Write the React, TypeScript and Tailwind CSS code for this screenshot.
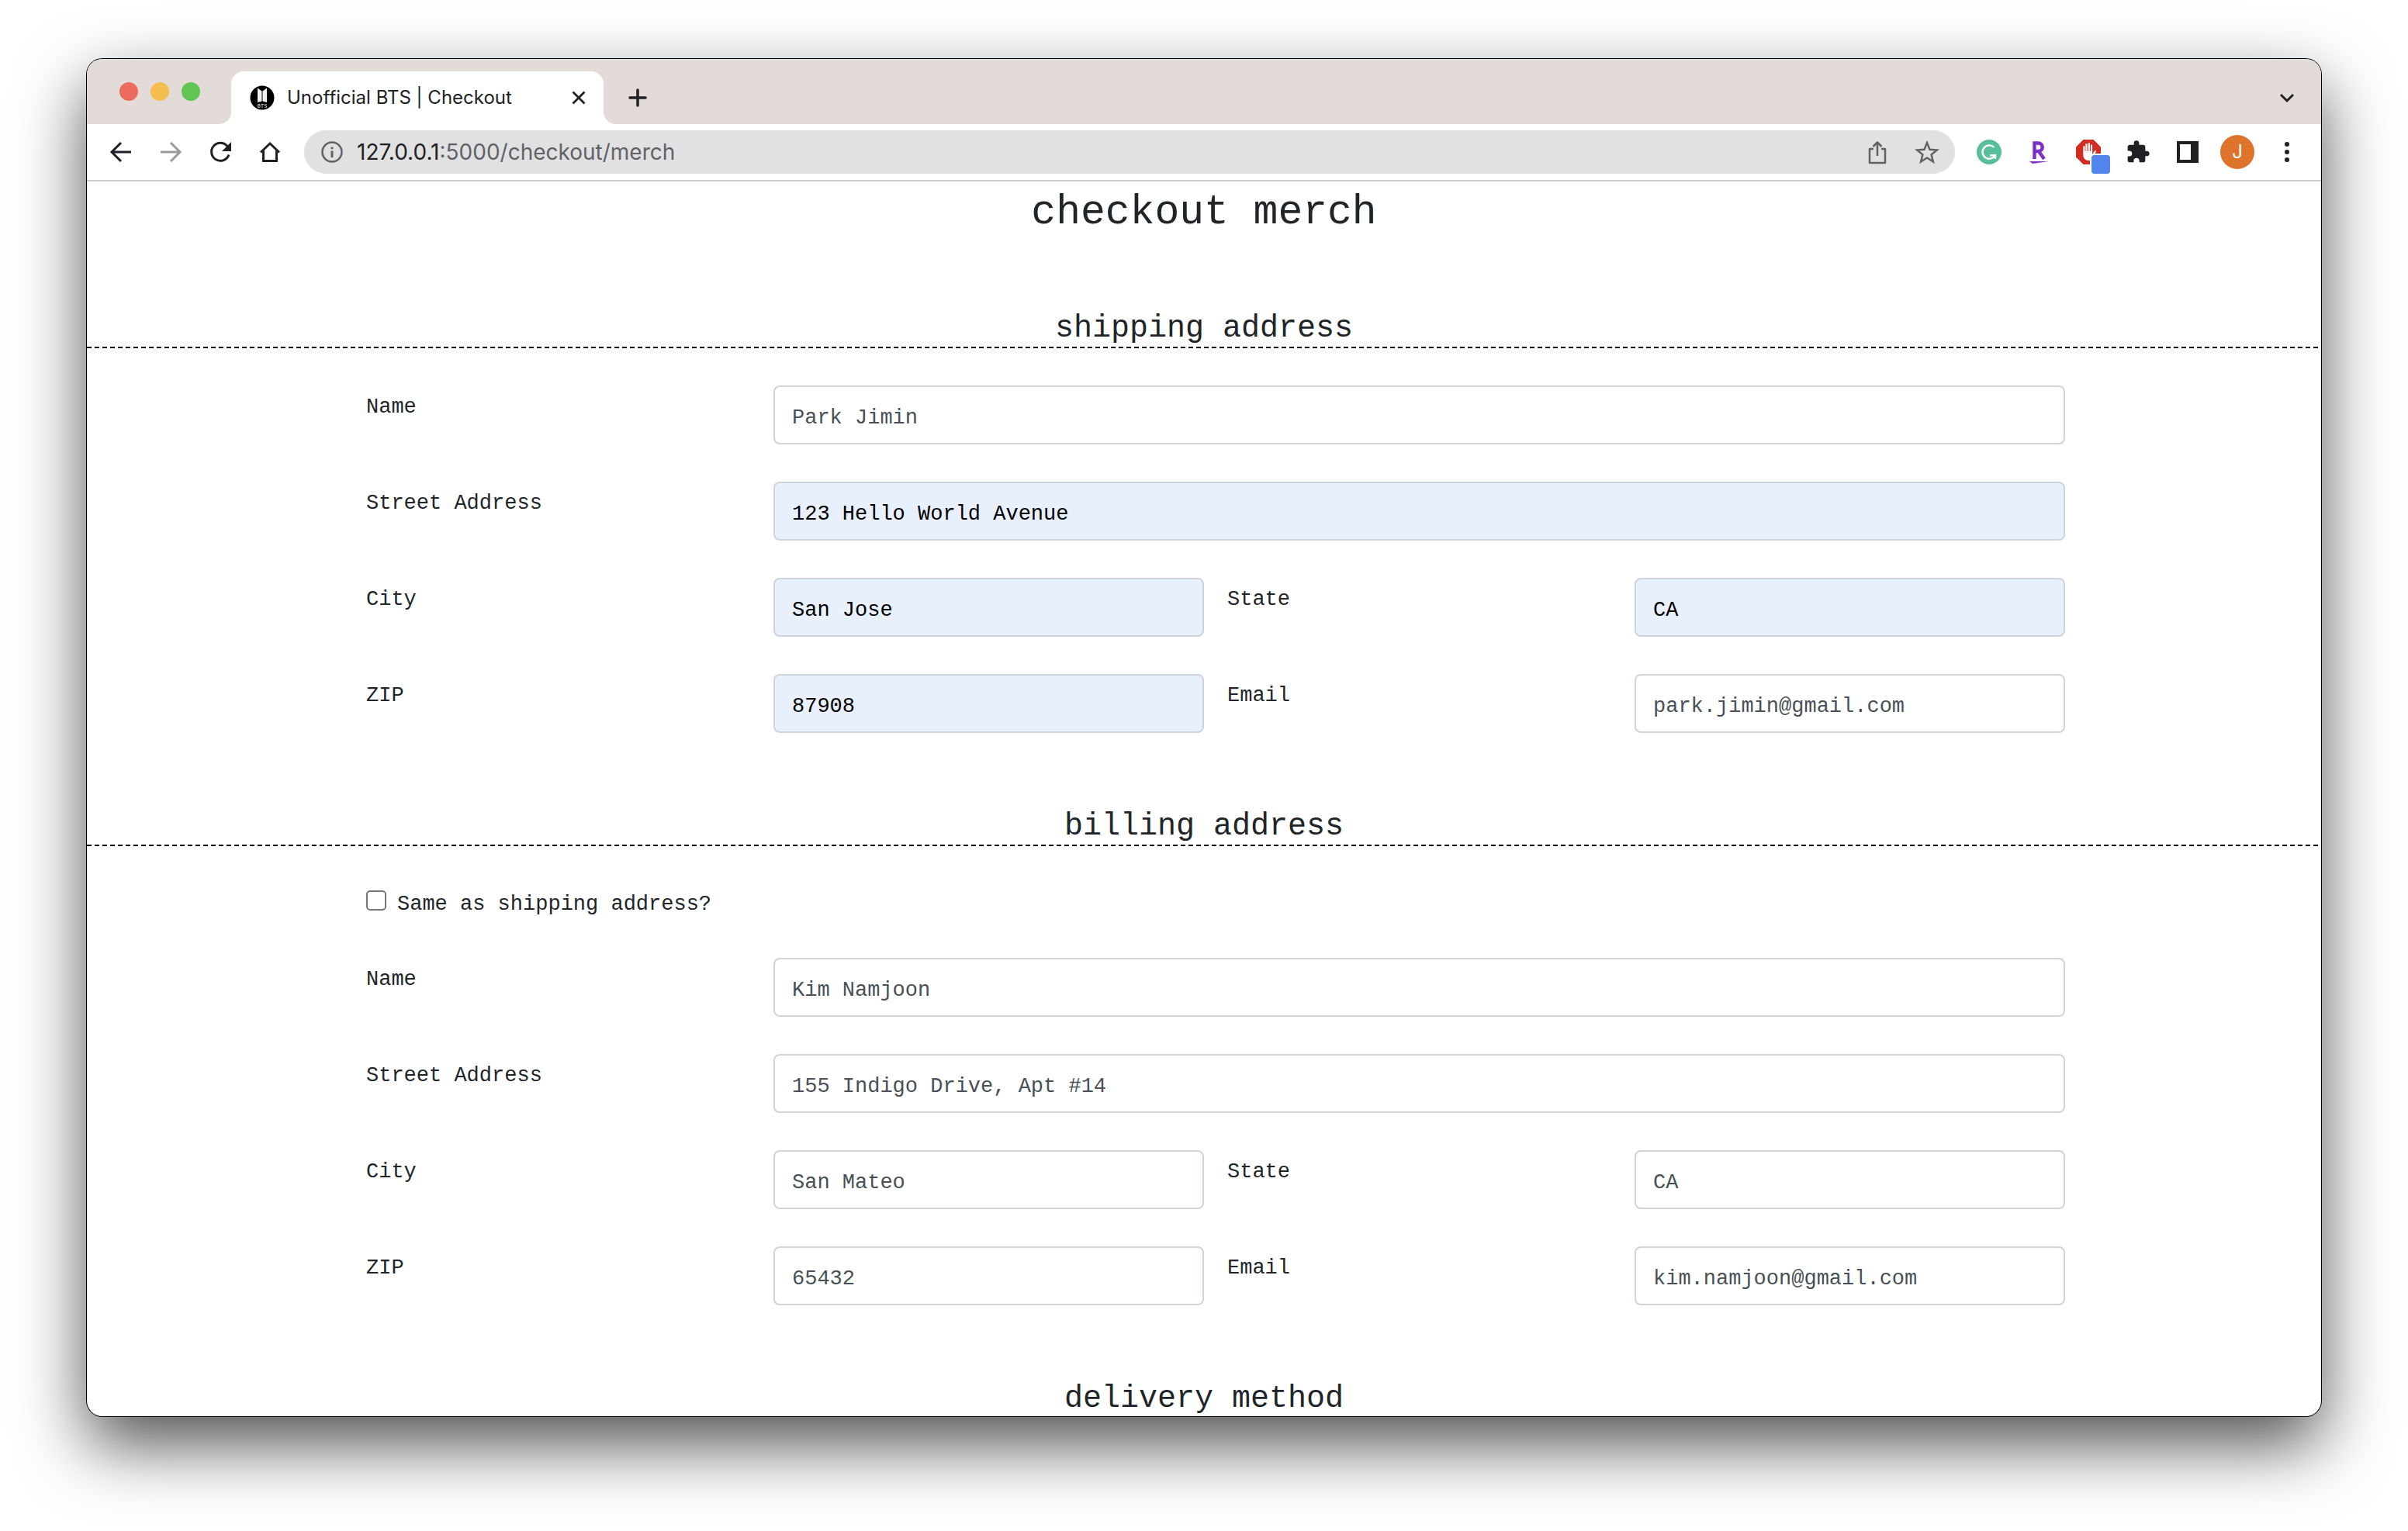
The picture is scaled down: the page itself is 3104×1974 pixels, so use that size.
import { ReactNode } from "react";

type FieldProps = { id: string; label: string; placeholder?: string; value?: string; wide?: boolean };

function Field({ id, label, placeholder, value, wide }: FieldProps) {
  return (
    <>
      <label htmlFor={id} className="pt-[10px] pl-[30px] text-[27px] leading-[36px] text-[#212529]">
        {label}
      </label>
      <input
        id={id}
        type="text"
        placeholder={placeholder}
        defaultValue={value}
        className={
          "h-19 w-full min-w-0 rounded-lg border-2 border-[#ced4da] px-[22px] pt-2 text-[27px] text-black placeholder:text-[#495057] placeholder:opacity-100 " +
          (value ? "bg-[#e8f0fe] " : "bg-white ") +
          (wide ? "col-span-3" : "")
        }
      />
    </>
  );
}

function SectionTitle({ children }: { children: ReactNode }) {
  return (
    <>
      <h2 className="pt-[2px] text-center text-[40px] leading-[46px] text-[#212529]">{children}</h2>
      <div className="h-[2px] bg-[repeating-linear-gradient(to_right,#000_0px,#000_6px,#fff_6px,#fff_10px)]" />
    </>
  );
}

function Fields({ children }: { children: ReactNode }) {
  return <div className="mx-auto grid w-full max-w-[2220px] grid-cols-4 gap-y-12">{children}</div>;
}

const iconButton = "flex size-16 shrink-0 items-center justify-center text-[#202124]";

function TabStrip() {
  return (
    <div className="flex h-[84px] items-end bg-[#e3dbd8] pl-[42px]">
      <div className="flex h-full items-center gap-4">
        <span className="size-6 rounded-full bg-[#ed6a5e]" />
        <span className="size-6 rounded-full bg-[#f5bf4f]" />
        <span className="size-6 rounded-full bg-[#61c554]" />
      </div>
      <div className="ml-6 flex items-end">
        <svg className="size-4" viewBox="0 0 16 16" aria-hidden="true">
          <path d="M16 0v16H0C9 16 16 9 16 0Z" fill="#fff" />
        </svg>
        <div className="flex h-[68px] w-[480px] items-center rounded-t-2xl bg-white pr-4 pl-6">
          <svg className="size-8 shrink-0" viewBox="0 0 32 32" aria-hidden="true">
            <circle cx="16" cy="16" r="15.5" fill="#000" />
            <path d="M10 3.500l5.500 4v13L10 22ZM22 3.500l-5.500 4v13L22 22Z" fill="#f2f2f2" />
            <path
              d="M10.500 24.500h2.500v4h-2.500ZM10.500 26.500h2.500M16 24.500v4.500M14.500 24.500h3.500M21.500 24.500h-2.200v2h2.200v2h-2.200"
              stroke="#c4c4c4"
              strokeWidth="0.900"
              fill="none"
            />
          </svg>
          <span className="ml-4 flex-1 text-[24px] whitespace-nowrap text-[#202124]">Unofficial BTS | Checkout</span>
          <button aria-label="Close tab" className="flex size-8 items-center justify-center">
            <svg className="size-5" viewBox="0 0 20 20" stroke="#202124" strokeWidth="2.800">
              <path d="M2.500 2.500l15 15M17.500 2.500l-15 15" />
            </svg>
          </button>
        </div>
        <svg className="size-4" viewBox="0 0 16 16" aria-hidden="true">
          <path d="M0 0v16h16C7 16 0 9 0 0Z" fill="#fff" />
        </svg>
      </div>
      <button aria-label="New tab" className="mb-[2px] flex h-16 w-14 items-center justify-center">
        <svg className="size-6" viewBox="0 0 24 24" stroke="#202124" strokeWidth="3.500" strokeLinecap="round">
          <path d="M12 2v20M2 12h20" />
        </svg>
      </button>
      <button aria-label="Search tabs" className="mr-3 mb-[2px] ml-auto flex size-16 items-center justify-center">
        <svg className="size-5" viewBox="0 0 20 20" fill="none" stroke="#202124" strokeWidth="3">
          <path d="M2 6l8 8 8-8" />
        </svg>
      </button>
    </div>
  );
}

function Toolbar() {
  return (
    <div className="flex h-[74px] shrink-0 items-center border-b-2 border-[#cdcdcd] bg-white px-3">
      <button aria-label="Back" className={iconButton}>
        <svg className="size-8" viewBox="0 0 32 32" fill="none" stroke="currentColor" strokeWidth="3">
          <path d="M29 16H5M16 4L4 16l12 12" />
        </svg>
      </button>
      <button aria-label="Forward" className={iconButton}>
        <svg className="size-8" viewBox="0 0 32 32" fill="none" stroke="#9b9b9b" strokeWidth="3">
          <path d="M3 16h24M16 4l12 12-12 12" />
        </svg>
      </button>
      <button aria-label="Reload" className={iconButton}>
        <svg className="size-8" viewBox="0 0 32 32" fill="none" stroke="currentColor" strokeWidth="3">
          <path d="M25 8.500A11.500 11.500 0 1 0 27 19.500" />
          <path d="M30 3v12H18Z" fill="currentColor" stroke="none" />
        </svg>
      </button>
      <button aria-label="Home" className={iconButton}>
        <svg className="size-8" viewBox="0 0 32 32" fill="none" stroke="currentColor" strokeWidth="3">
          <path d="M4 16.500L16 5l12 11.500M7.500 14v13.500h17V14" />
        </svg>
      </button>
      <div className="ml-3 flex h-14 min-w-0 flex-1 items-center rounded-full bg-[#e1e1e1] pr-1 pl-[22px]">
        <svg className="size-7 shrink-0" viewBox="0 0 28 28" fill="none" stroke="#5f6368" strokeWidth="2.500" aria-hidden="true">
          <circle cx="14" cy="14" r="12.500" />
          <path d="M14 12.500V21M14 7.500v2.800" strokeWidth="3" />
        </svg>
        <span className="ml-[18px] flex-1 truncate text-[28px] text-[#5f6368]">
          <span className="text-[#202124]">127.0.0.1</span>:5000/checkout/merch
        </span>
        <button aria-label="Share" className={iconButton}>
          <svg className="size-8" viewBox="0 0 32 32" fill="none" stroke="#5f6368" strokeWidth="2.500" strokeLinejoin="round">
            <path d="M11 12H6v18h20V12H21M16 21V4M10.500 9L16 3.500 21.500 9" />
          </svg>
        </button>
        <button aria-label="Bookmark" className={iconButton}>
          <svg className="size-8" viewBox="0 0 32 32" fill="none" stroke="#5f6368" strokeWidth="2.500">
            <path d="M16 4l3.500 8.700 9.300.7-7.200 6 2.300 9.100L16 23.500l-7.900 5 2.300-9.100-7.200-6 9.300-.7Z" />
          </svg>
        </button>
      </div>
      <div className="ml-3 flex">
        <button aria-label="Grammar" className={iconButton}>
          <svg className="size-8" viewBox="0 0 32 32" fill="none">
            <circle cx="16" cy="16" r="16" fill="#58bf9b" />
            <path d="M22.500 10a8.700 8.700 0 1 0 1.500 10M17 20.500L24 20v5" stroke="#fff" strokeWidth="2.400" />
          </svg>
        </button>
        <button aria-label="Rewards" className={iconButton}>
          <svg className="size-8" viewBox="0 0 32 32" fill="none">
            <path d="M10.500 25V4.500h5a4.900 4.900 0 0 1 0 10.500H10.500M16 15L23 25" stroke="#7d30c6" strokeWidth="4.400" />
            <path d="M4 28h25L8 31Z" fill="#7d30c6" />
          </svg>
        </button>
        <button aria-label="Ad blocker" className={iconButton + " relative"}>
          <svg className="size-8" viewBox="0 0 32 32">
            <path d="M9.500 0h13L32 9.500v13L22.500 32h-13L0 22.500v-13Z" fill="#d22d20" />
            <path d="M10.500 17V9M13.500 16V6M16.800 16V5M20 17V7.500" stroke="#fff" strokeWidth="2.200" strokeLinecap="round" />
            <path d="M9.400 15h11.700v4l3-4.500c1-1 2.200-.2 1.700 1L22 24c-1 2-2.500 3-5.500 3C12 27 9.400 24 9.400 20Z" fill="#fff" />
          </svg>
          <span className="absolute right-1 bottom-1 size-6 rounded bg-[#5286ec] shadow-[0_0_0_2px_#fff]" />
        </button>
        <button aria-label="Extensions" className={iconButton}>
          <svg className="size-8" viewBox="0 0 24 24" fill="currentColor">
            <path d="M20.500 11H19V7c0-1.100-.9-2-2-2h-4V3.500a2.500 2.500 0 0 0-5 0V5H4c-1.100 0-2 .9-2 2v3.800h1.500a2.700 2.700 0 0 1 0 5.400H2V20c0 1.100.9 2 2 2h3.800v-1.500a2.700 2.700 0 0 1 5.400 0V22H17c1.100 0 2-.9 2-2v-4h1.500a2.500 2.500 0 0 0 0-5Z" />
          </svg>
        </button>
        <button aria-label="Side panel" className={iconButton}>
          <svg className="size-7" viewBox="0 0 28 28" fill="currentColor">
            <path fillRule="evenodd" d="M0 0h28v28H0ZM4 4v20h14V4Z" />
          </svg>
        </button>
        <button aria-label="Profile" className={iconButton}>
          <span className="flex size-11 items-center justify-center rounded-full bg-[#de732c] text-[24px] text-white">J</span>
        </button>
        <button aria-label="Menu" className={iconButton}>
          <svg className="size-7" viewBox="0 0 28 28" fill="currentColor">
            <circle cx="14" cy="4" r="3" />
            <circle cx="14" cy="14" r="3" />
            <circle cx="14" cy="24" r="3" />
          </svg>
        </button>
      </div>
    </div>
  );
}

export default function App() {
  return (
    <div className="h-screen overflow-hidden bg-white px-28 pt-19 pb-37">
      <div className="flex h-full flex-col overflow-hidden rounded-[20px] bg-white font-[Inter,sans-serif] shadow-[0_0_0_1px_#000,0_36px_88px_rgba(0,0,0,0.69)]">
        <TabStrip />
        <Toolbar />
        <main className="min-h-0 flex-1 overflow-hidden font-['Liberation_Mono',monospace]">
          <h1 className="pt-2 text-center text-[53px] leading-[64px] text-[#212529]">checkout merch</h1>
          <form>
            <section className="pt-[93px]">
              <SectionTitle>shipping address</SectionTitle>
              <div className="pt-12">
                <Fields>
                  <Field id="ship-name" label="Name" placeholder="Park Jimin" wide />
                  <Field id="ship-street" label="Street Address" value="123 Hello World Avenue" wide />
                  <Field id="ship-city" label="City" value="San Jose" />
                  <Field id="ship-state" label="State" value="CA" />
                  <Field id="ship-zip" label="ZIP" value="87908" />
                  <Field id="ship-email" label="Email" placeholder="park.jimin@gmail.com" />
                </Fields>
              </div>
            </section>
            <section className="pt-24">
              <SectionTitle>billing address</SectionTitle>
              <div className="mx-auto flex w-full max-w-[2220px] items-start pt-[54px] pb-12 pl-[30px]">
                <input
                  id="same"
                  type="checkbox"
                  className="mt-[3px] size-[26px] appearance-none rounded-[5px] border-2 border-[#767676] bg-white"
                />
                <label htmlFor="same" className="ml-[14px] text-[27px] leading-[42px] text-[#212529]">
                  Same as shipping address?
                </label>
              </div>
              <Fields>
                <Field id="bill-name" label="Name" placeholder="Kim Namjoon" wide />
                <Field id="bill-street" label="Street Address" placeholder="155 Indigo Drive, Apt #14" wide />
                <Field id="bill-city" label="City" placeholder="San Mateo" />
                <Field id="bill-state" label="State" placeholder="CA" />
                <Field id="bill-zip" label="ZIP" placeholder="65432" />
                <Field id="bill-email" label="Email" placeholder="kim.namjoon@gmail.com" />
              </Fields>
            </section>
            <section className="pt-24">
              <SectionTitle>delivery method</SectionTitle>
            </section>
          </form>
        </main>
      </div>
    </div>
  );
}
